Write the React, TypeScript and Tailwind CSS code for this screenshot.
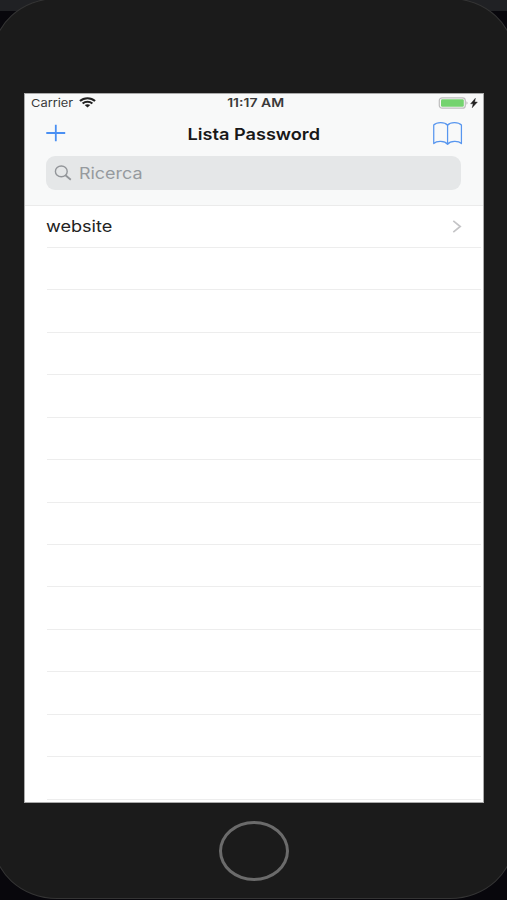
const rows: string[] = ['website', '', '', '', '', '', '', '', '', '', '', '', '', ''];

function StatusBar() {
  return (
    <div className="grid h-[20px] grid-cols-3 items-center pl-[7px] pr-[5px] text-[11px] leading-[20px] text-[#3a3a3a]">
      <div className="flex items-center">
        <span className="w-[48px] origin-left scale-x-[1.17] whitespace-nowrap">Carrier</span>
        <svg className="-mt-px h-[11px] w-[17px]" viewBox="0 0 16 11" preserveAspectRatio="none" fill="none" stroke="#222" strokeWidth="2">
          <path d="M.9 4.1C4.8.4 11.2.4 15.1 4.1" />
          <path d="M3.4 6.5c2.6-2.3 6.6-2.3 9.2 0" />
          <path d="M5.4 8.1c1.5-1.3 3.7-1.3 5.2 0L8 10.6z" fill="#222" stroke="none" />
        </svg>
      </div>
      <span className="origin-center translate-x-[1px] scale-x-[1.22] whitespace-nowrap text-center text-[11.5px] font-semibold">11:17 AM</span>
      <div className="flex items-center justify-end gap-[2px]">
        <svg className="h-[12px] w-[30px]" viewBox="0 0 30 12">
          <rect x="1.3" y=".8" width="26" height="10.4" rx="2.8" fill="#f8f8f8" stroke="#bdbdbd" strokeWidth="1.2" />
          <rect x="3" y="2.3" width="22.8" height="7.4" rx="1.3" fill="#74d36f" />
          <path d="M28.4 4.3c1.6.4 1.6 3 0 3.4z" fill="#bdbdbd" />
        </svg>
        <svg className="h-[10px] w-[8px]" viewBox="0 0 8 10">
          <path d="M5.4.2.6 5.8h2.5L2.2 9.8l5.2-5.8H4.7z" fill="#222" stroke="#222" strokeWidth=".4" />
        </svg>
      </div>
    </div>
  );
}

function NavBar() {
  return (
    <div className="flex h-[43px] items-center justify-between pl-[22px] pr-[20px]">
      <svg className="-mt-[3px] h-[18px] w-[20px]" viewBox="0 0 20 18" stroke="#4a90f3" strokeWidth="1.8">
        <path d="M.3 9h18.9M9.8.7v16.6" />
      </svg>
      <h1 className="-mt-[2px] origin-center translate-x-[5.5px] scale-x-[1.1] whitespace-nowrap text-[16.5px] font-semibold leading-[24px] text-[#181818]">
        Lista Password
      </h1>
      <svg className="-mt-[3px] h-[25px] w-[32px]" viewBox="0 0 32 26" fill="none" stroke="#5796ef" strokeWidth="1.3" strokeLinejoin="round">
        <path d="M16.6 4.4C13.6 .8 5.4 .8 2.2 4.2v19.2C5.4 20.4 13.6 20.4 16.6 24.2c3-3.8 11.2-3.8 14.4-.8V4.2C27.8 .8 19.6 .8 16.6 4.4zM16.6 4.4v19.8" />
      </svg>
    </div>
  );
}

function SearchField() {
  return (
    <div className="ml-[22px] mr-[23px] flex h-[34px] items-center rounded-[9px] bg-[#e5e7e8] pl-[8px]">
      <svg className="h-[16px] w-[18px]" viewBox="0 0 18 16" fill="none" stroke="#929599" strokeWidth="1.4">
        <ellipse cx="7.3" cy="6.4" rx="5.9" ry="5.4" />
        <path d="m11.5 10.3 5.3 4.5" strokeWidth="1.8" />
      </svg>
      <span className="ml-[7px] origin-left scale-x-[1.12] text-[16px] leading-[24px] text-[#969a9e]">Ricerca</span>
    </div>
  );
}

export default function App() {
  return (
    <div className="relative h-[900px] w-[507px] overflow-hidden bg-[#08070c] font-['Inter','Liberation_Sans',sans-serif]">
      <div className="h-[11px] bg-[#202124]" />
      <div className="absolute -left-[8px] -right-[8px] -top-[2px] bottom-[1px] flex flex-col items-center rounded-[65px/60px] border border-[#343434] bg-[#1b1b1b] pt-[94px]">
        <div className="flex h-[710px] w-[460px] shrink-0 flex-col overflow-hidden bg-white outline outline-1 -outline-offset-1 outline-[#aaaaaa]">
          <header className="h-[113px] shrink-0 border-b border-[#ebebeb] bg-[#f8f9f9]">
            <StatusBar />
            <NavBar />
            <SearchField />
          </header>
          <ul className="shrink-0 pl-[23px] pr-[3px]">
            {rows.map((label, i) => (
              <li key={i} className="flex h-[42.45px] items-center justify-between border-b border-[#ededed] pr-[19px] first:h-[41.9px]">
                {label && (
                  <>
                    <span className="-ml-px origin-left scale-x-[1.13] text-[16px] leading-[22px] text-[#222]">{label}</span>
                    <svg className="h-[13px] w-[10px]" viewBox="0 0 10 14" fill="none" stroke="#c4c4c6" strokeWidth="1.8">
                      <path d="m1 1 7.5 6L1 13" />
                    </svg>
                  </>
                )}
              </li>
            ))}
          </ul>
        </div>
        <div className="mt-[18px] h-[60px] w-[70px] shrink-0 rounded-[50%] border-[3px] border-[#6b6b6b]" />
      </div>
    </div>
  );
}
